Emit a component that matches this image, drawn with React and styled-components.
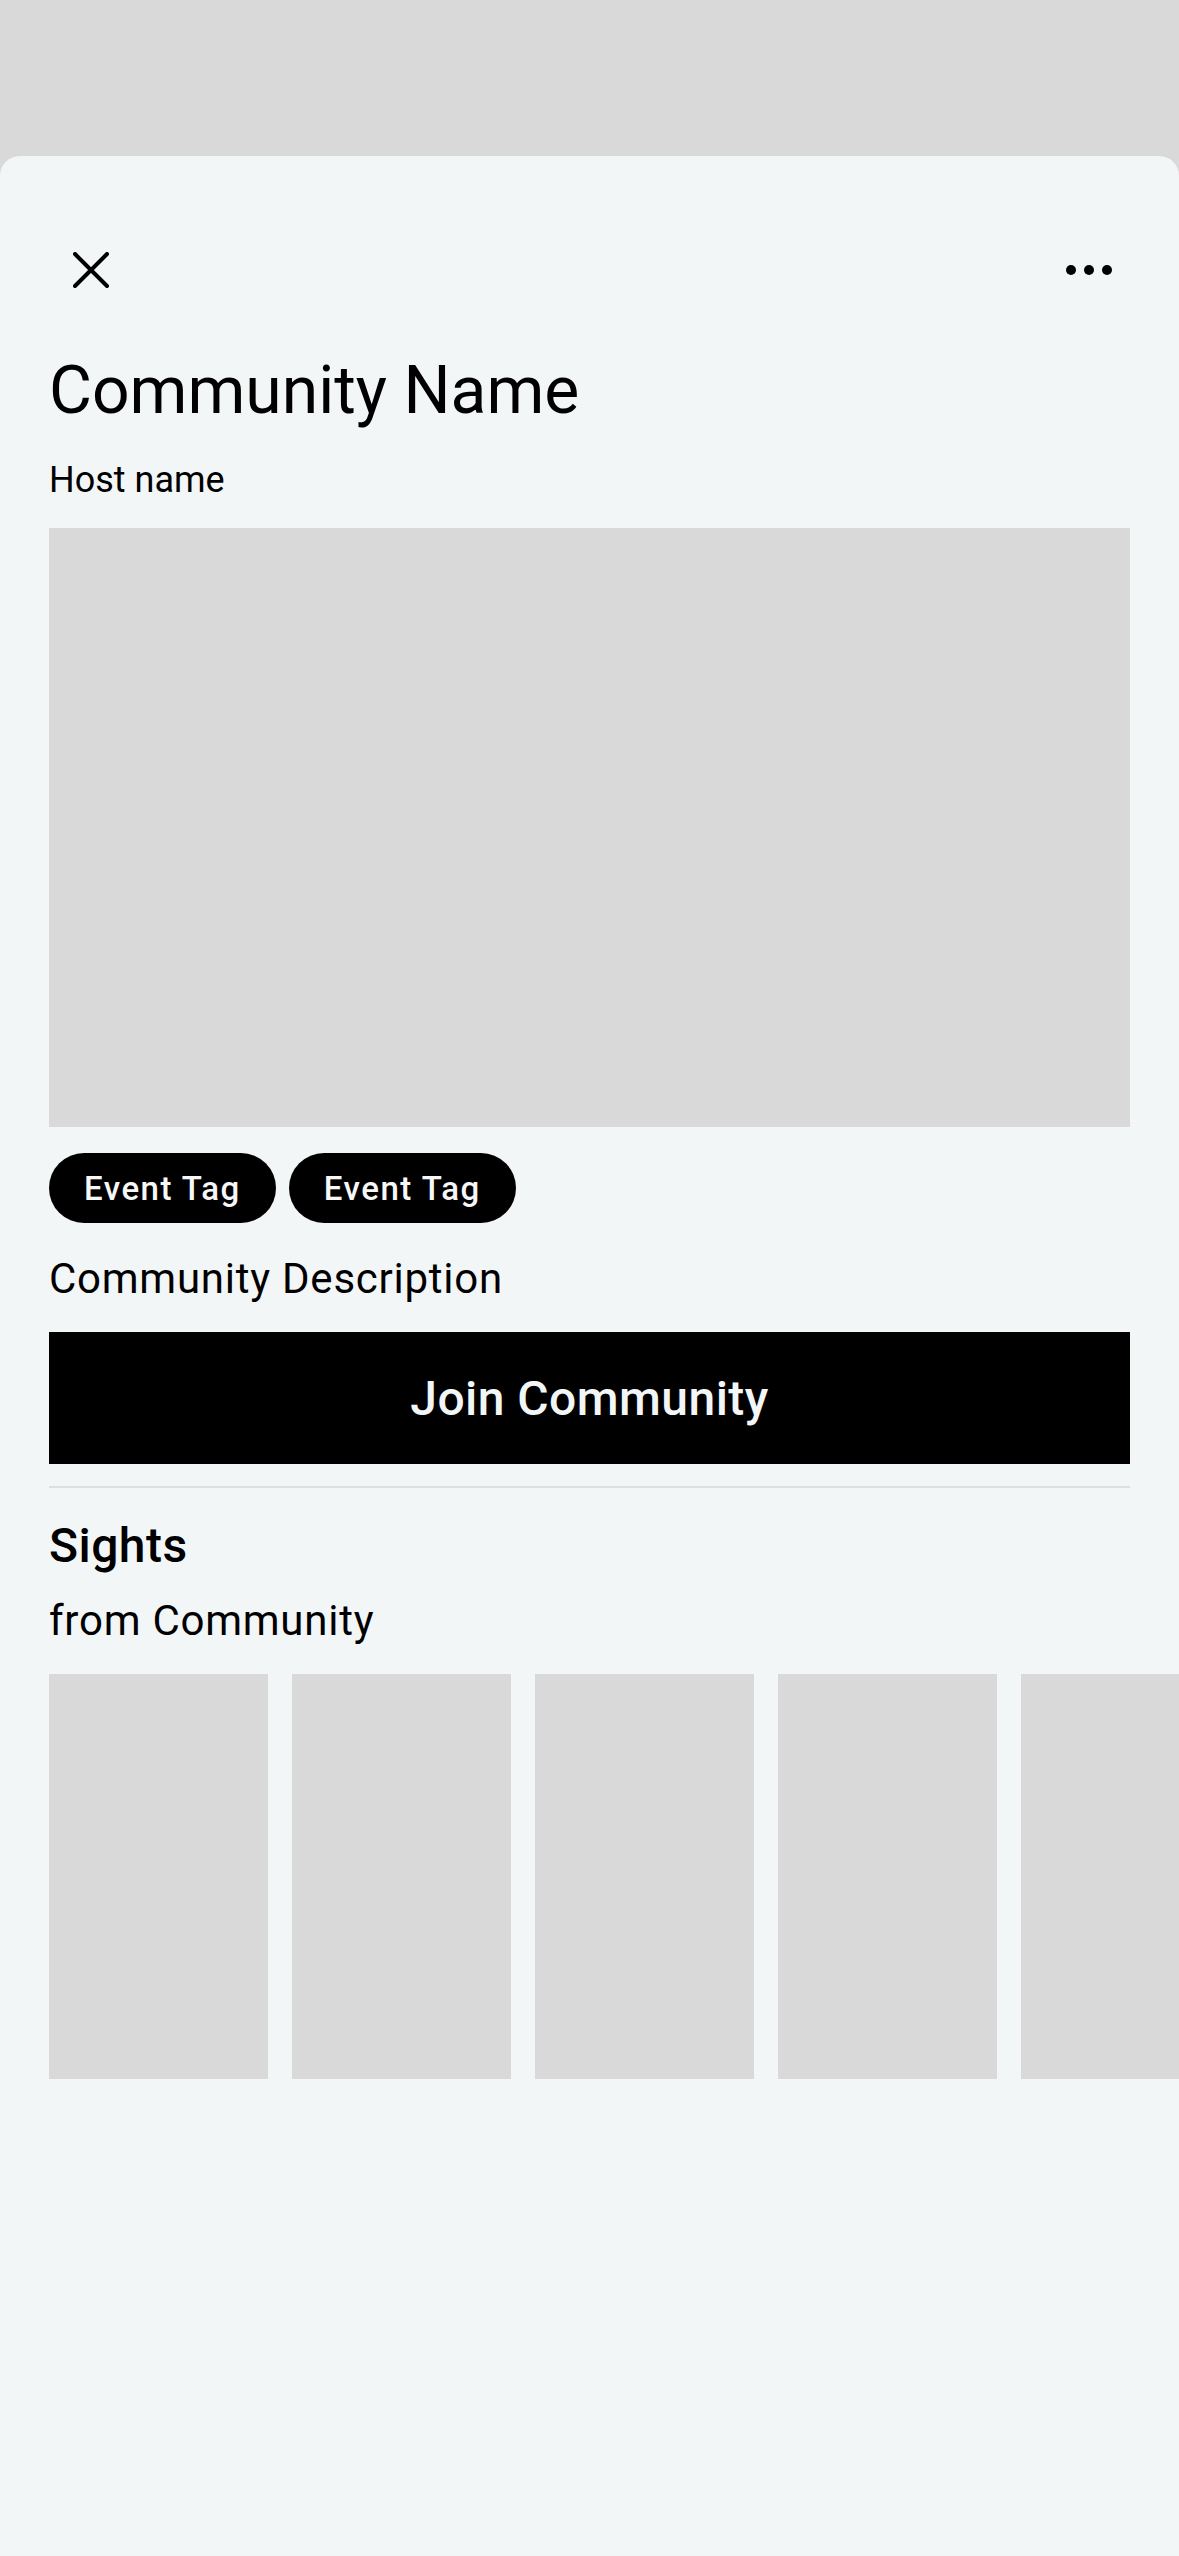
import React from 'react';
import styled, { createGlobalStyle } from 'styled-components';

const GlobalStyle = createGlobalStyle`
  html, body {
    margin: 0;
    padding: 0;
    background: #d9d9d9;
  }
  * {
    box-sizing: border-box;
  }
`;

const Page = styled.div`
  min-height: 100vh;
  padding-top: 156px;
  background: #d9d9d9;
  font-family: Roboto, "Noto Sans", sans-serif;
  color: #000;
`;

const Sheet = styled.div`
  min-height: calc(100vh - 156px);
  background: #f3f6f7;
  border-radius: 20px 20px 0 0;
  padding: 0 49px;
  overflow: hidden;
`;

const Header = styled.div`
  height: 72px;
  margin-top: 78px;
  display: flex;
  align-items: center;
  justify-content: space-between;
`;

const IconButton = styled.button`
  border: 0;
  background: none;
  padding: 0;
  display: flex;
  align-items: center;
  justify-content: center;
  margin: ${(p) => (p.$right ? '0 18px 0 0' : '0 0 0 24px')};
  cursor: pointer;
`;

const Title = styled.h1`
  margin: 45px 0 0;
  font-size: 66px;
  line-height: 80px;
  font-weight: 400;
`;

const Host = styled.div`
  margin-top: 27px;
  font-size: 36px;
  line-height: 44px;
`;

const Placeholder = styled.div`
  background: #d9d9d9;
`;

const Cover = styled(Placeholder)`
  margin-top: 26px;
  height: 599px;
`;

const Tags = styled.div`
  display: flex;
  gap: 13px;
  margin-top: 26px;
`;

const Tag = styled.span`
  height: 70px;
  padding: 0 35px;
  border-radius: 35px;
  background: #000;
  color: #f7f7f7;
  display: flex;
  align-items: center;
  font-size: 33px;
  font-weight: 500;
  letter-spacing: 1.5px;
`;

const Body = styled.p`
  margin: ${(p) => p.$top}px 0 0;
  font-size: 42px;
  line-height: 50px;
  letter-spacing: 0.75px;
`;

const JoinButton = styled.button`
  display: block;
  width: 100%;
  height: 132px;
  margin-top: 28px;
  border: 0;
  background: #000;
  color: #f3f6f7;
  font-family: Roboto, "Noto Sans", sans-serif;
  font-size: 48px;
  font-weight: 500;
  letter-spacing: 0.45px;
`;

const Divider = styled.hr`
  margin: 22px 0 0;
  border: 0;
  height: 2px;
  background: #dce0e2;
`;

const SectionTitle = styled.h2`
  margin: 30px 0 0;
  font-size: 48px;
  line-height: 56px;
  font-weight: 500;
  letter-spacing: 0.45px;
`;

const Strip = styled.div`
  display: flex;
  gap: 24px;
  margin: 28px -49px 0 0;
  overflow: hidden;
`;

const Thumb = styled(Placeholder)`
  flex: 0 0 219px;
  height: 405px;
`;

const CloseIcon = () => (
  <svg width="36" height="36" viewBox="0 0 36 36">
    <path d="M2 2 L34 34 M34 2 L2 34" stroke="#000" strokeWidth="4" strokeLinecap="round" />
  </svg>
);

const MoreIcon = () => (
  <svg width="46" height="12" viewBox="0 0 46 12">
    <circle cx="5" cy="6" r="5" fill="#000" />
    <circle cx="23" cy="6" r="5" fill="#000" />
    <circle cx="41" cy="6" r="5" fill="#000" />
  </svg>
);

export default function App() {
  return (
    <Page>
      <GlobalStyle />
      <Sheet>
        <Header>
          <IconButton aria-label="Close">
            <CloseIcon />
          </IconButton>
          <IconButton $right aria-label="More">
            <MoreIcon />
          </IconButton>
        </Header>
        <Title>Community Name</Title>
        <Host>Host name</Host>
        <Cover />
        <Tags>
          <Tag>Event Tag</Tag>
          <Tag>Event Tag</Tag>
        </Tags>
        <Body $top={31}>Community Description</Body>
        <JoinButton>Join Community</JoinButton>
        <Divider />
        <SectionTitle>Sights</SectionTitle>
        <Body $top={22}>from Community</Body>
        <Strip>
          {[0, 1, 2, 3, 4].map((i) => (
            <Thumb key={i} />
          ))}
        </Strip>
      </Sheet>
    </Page>
  );
}
